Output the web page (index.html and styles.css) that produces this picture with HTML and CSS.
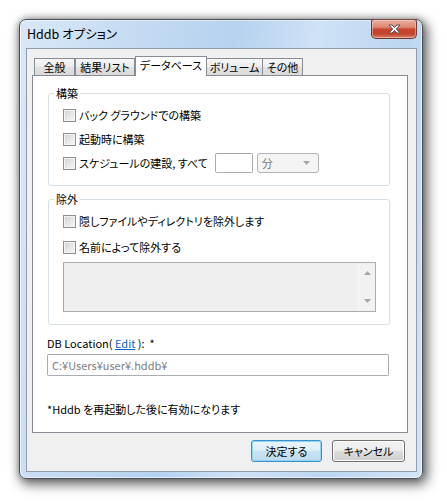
FILE: index.html
```html
<!DOCTYPE html>
<html lang="ja">
<head>
<meta charset="utf-8">
<title>Hddb オプション</title>
<link rel="stylesheet" href="styles.css">
</head>
<body>
<div class="window">
  <div class="titlebar">
    <span class="title">Hddb オプション</span>
    <button class="close" type="button" aria-label="閉じる">
      <svg width="13" height="10" viewBox="-1 -1 13 10"><polygon points="0,0 3,0 5.5,2.5 8,0 11,0 7.3,4 11,8 8,8 5.5,5.5 3,8 0,8 3.7,4" fill="#fff" stroke="#555" stroke-width="1" stroke-linejoin="round"/></svg>
    </button>
  </div>
  <div class="client">
    <div class="tabs">
      <div class="tab tab-general">全般</div>
      <div class="tab tab-results">結果リスト</div>
      <div class="tab tab-db selected">データベース</div>
      <div class="tab tab-volume">ボリューム</div>
      <div class="tab tab-other">その他</div>
    </div>
    <div class="panel">
      <fieldset class="group group-build">
        <legend>構築</legend>
        <div class="row"><span class="cb"></span><span class="lbl">バック グラウンドでの構築</span></div>
        <div class="row"><span class="cb"></span><span class="lbl">起動時に構築</span></div>
        <div class="row"><span class="cb"></span><span class="lbl">スケジュールの建設, すべて</span>
          <span class="num-input"></span>
          <span class="combo"><span class="combo-text">分</span>
            <svg class="combo-arrow" width="7" height="4" viewBox="0 0 7 4"><polygon points="0,0 7,0 3.5,4" fill="#a6a6a6"/></svg>
          </span>
        </div>
      </fieldset>
      <fieldset class="group group-exclude">
        <legend>除外</legend>
        <div class="row"><span class="cb"></span><span class="lbl">隠しファイルやディレクトリを除外します</span></div>
        <div class="row row-second"><span class="cb"></span><span class="lbl">名前によって除外する</span></div>
        <div class="listbox">
          <div class="list-body"></div>
          <div class="vscroll">
            <svg width="7" height="4" viewBox="0 0 7 4"><polygon points="0,4 7,4 3.5,0" fill="#a8a8a8"/></svg>
            <svg width="7" height="4" viewBox="0 0 7 4"><polygon points="0,0 7,0 3.5,4" fill="#a8a8a8"/></svg>
          </div>
        </div>
      </fieldset>
      <div class="db-label">DB Location( <a class="link" href="#">Edit</a> ):&nbsp; *</div>
      <div class="path-field">C:¥Users¥user¥.hddb¥</div>
      <div class="note">*Hddb を再起動した後に有効になります</div>
    </div>
    <div class="buttons">
      <button class="btn btn-default" type="button">決定する</button>
      <button class="btn btn-cancel" type="button">キャンセル</button>
    </div>
  </div>
</div>
</body>
</html>
```
FILE: styles.css
```css
* { box-sizing: border-box; }
html, body {
  margin: 0;
  padding: 0;
  background: #fff;
  width: 447px;
  height: 503px;
  overflow: hidden;
}
body {
  font-family: "Noto Sans CJK JP", "Noto Sans", sans-serif;
  font-size: 11px;
  font-feature-settings: "palt";
  color: #000;
  padding: 19px 0 0 19px;
}
.window {
  width: 404px;
  height: 460px;
  border: 1px solid #4b5057;
  border-radius: 7px;
  padding: 0 5px 6px 6px;
  background: linear-gradient(100deg, #d9e8f8 0%, #c8ddf3 20%, #b5d2ef 45%, #cfe2f6 62%, #bcd6f0 80%, #d3e5f7 100%);
  box-shadow: inset 0 0 0 1px rgba(255,255,255,0.55), 3px 4px 12px 2px rgba(0,0,0,0.55), 0 0 6px rgba(0,0,0,0.3);
  display: flex;
  flex-direction: column;
}
.titlebar {
  height: 28px;
  display: flex;
  align-items: center;
  justify-content: space-between;
}
.title {
  padding-left: 1px;
  padding-bottom: 2px;
  font-size: 12.5px;
  color: #000;
}
.close {
  align-self: flex-start;
  margin-top: -1px;
  width: 46px;
  height: 20px;
  padding: 0;
  border: 1px solid #6e3a32;
  border-top-color: #7b4a42;
  border-radius: 3px 3px 5px 5px;
  background: linear-gradient(#eab0a2 0%, #dd8670 40%, #c7452e 52%, #c3442e 78%, #d98670 100%);
  box-shadow: inset 0 0 0 1px rgba(255,220,210,0.45);
  display: flex;
  align-items: center;
  justify-content: center;
}
.client {
  height: 424px;
  border: 1px solid #8e9cad;
  background: #f0f0f0;
  padding: 7px 8px 0 5px;
  display: flex;
  flex-direction: column;
}
.tabs {
  height: 19px;
  padding-left: 2px;
  display: flex;
  align-items: flex-end;
}
.tab {
  height: 17px;
  border: 1px solid #898c95;
  border-bottom: none;
  background: linear-gradient(#f6f6f6 0%, #ececec 50%, #e2e2e2 52%, #dadada 100%);
  display: flex;
  align-items: center;
  justify-content: center;
  line-height: 13px;
  white-space: nowrap;
}
.tab-general { width: 41px; }
.tab-results { width: 60px; }
.tab-db { width: 72px; }
.tab-volume { width: 57px; margin-left: -1px; }
.tab-other { width: 41px; margin-left: -1px; }
.tab.selected {
  position: relative;
  z-index: 1;
  height: 20px;
  margin-bottom: -1px;
  background: #fff;
  padding-bottom: 3px;
}
.panel {
  height: 358px;
  border: 1px solid #898c95;
  background: #fff;
  display: flex;
  flex-direction: column;
}
.group {
  margin: 0 0 0 15px;
  padding: 0 0 10px 0;
  width: 342px;
  min-inline-size: 0;
  border: 1px solid #d5dfe5;
  border-radius: 3px;
}
.group legend {
  margin-left: 5px;
  padding: 0 2px;
  line-height: 14px;
  font-size: 11px;
}
.group-build { margin-top: 10px; padding-top: 3px; }
.group-exclude { margin-top: 6px; padding-top: 3px; padding-bottom: 12px; }
.row {
  height: 24px;
  display: flex;
  align-items: center;
  padding-left: 14px;
}
.row-second { margin-top: 2px; }
.cb {
  flex: none;
  width: 13px;
  height: 13px;
  border: 1px solid #8e8f8f;
  background: linear-gradient(135deg, #cfd1d4 0%, #e4e5e6 50%, #f6f6f6 100%);
  box-shadow: inset 0 0 0 1px #f4f4f4;
  margin-right: 3px;
}
.lbl { white-space: nowrap; line-height: 14px; }
.num-input {
  width: 38px;
  height: 20px;
  margin-left: 7px;
  border: 1px solid #abadb3;
  border-top-color: #9fa3aa;
  border-radius: 2px;
  background: #fff;
}
.combo {
  width: 62px;
  height: 20px;
  margin-left: 4px;
  border: 1px solid #b2b6ba;
  border-radius: 3px;
  background: #f4f4f4;
  display: flex;
  align-items: center;
  justify-content: space-between;
  padding: 0 8px 0 4px;
}
.combo-text { color: #7a7a7a; line-height: 14px; }
.listbox {
  margin: 3px 0 0 14px;
  width: 313px;
  height: 50px;
  border: 1px solid #acacac;
  background: #efefef;
  display: flex;
}
.list-body { flex: 1; }
.vscroll {
  width: 17px;
  border-left: 1px solid #f7f7f7;
  background: #f1f1f1;
  display: flex;
  flex-direction: column;
  justify-content: space-between;
  align-items: center;
  padding: 8px 0 8px 0;
}
.db-label {
  margin: 11px 0 0 14px;
  line-height: 14px;
}
.link { color: #0066cc; text-decoration: underline; }
.path-field {
  margin: 4px 0 0 14px;
  width: 342px;
  height: 22px;
  border: 1px solid #abadb3;
  border-top-color: #a3a6ad;
  border-radius: 2px;
  background: #fff;
  color: #7d7d7d;
  padding-left: 4px;
  display: flex;
  align-items: center;
  line-height: 14px;
}
.note {
  margin: 26px 0 0 14px;
  line-height: 14px;
}
.buttons {
  margin-top: 7px;
  display: flex;
  justify-content: flex-end;
  gap: 10px;
  padding-right: 3px;
}
.btn {
  height: 22px;
  padding: 0;
  font-family: inherit;
  font-size: 11px;
  font-feature-settings: "palt";
  color: #000;
  border-radius: 3px;
  display: flex;
  align-items: center;
  justify-content: center;
  line-height: 14px;
}
.btn-default {
  width: 71px;
  border: 1px solid #3c8fd0;
  background: linear-gradient(#eaf5fb 0%, #dcedf8 50%, #c8e3f4 52%, #bedcf0 100%);
  box-shadow: inset 0 0 0 1px #8fd3f5;
}
.btn-cancel {
  width: 73px;
  border: 1px solid #707070;
  background: linear-gradient(#f2f2f2 0%, #ebebeb 50%, #dddddd 52%, #cfcfcf 100%);
  box-shadow: inset 0 0 0 1px #fbfbfb;
}
```
